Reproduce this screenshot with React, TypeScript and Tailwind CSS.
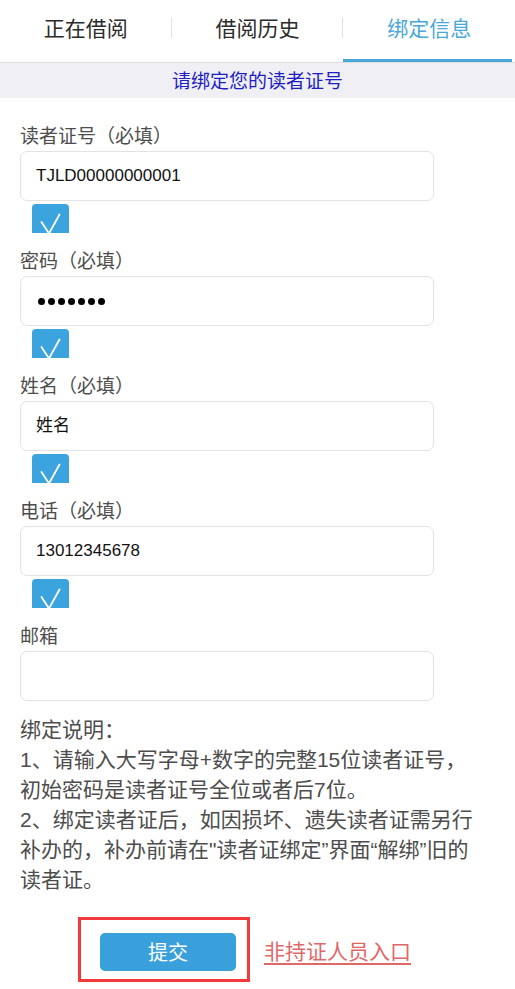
import React from 'react';

const font = { fontFamily: '"Noto Sans CJK SC", "Noto Sans", sans-serif' };
const mixed = { fontFamily: '"Liberation Sans", "Noto Sans CJK SC", sans-serif' };

const tabs = ['正在借阅', '借阅历史', '绑定信息'];

const Check = () => (
  <div className="mt-[3px] ml-[12px] h-[29px] w-[37px] overflow-hidden rounded-t-[4px] bg-[#3ba3de]">
    <svg width="37" height="29" viewBox="0 0 37 29" fill="none">
      <path d="M9.5 18 L17 29.5 L27.5 10.5" stroke="#fff" strokeWidth="1.8" strokeLinecap="round" strokeLinejoin="round" />
    </svg>
  </div>
);

type FieldProps = {
  label: string;
  value?: string;
  password?: boolean;
  checked?: boolean;
};

const Field = ({ label, value = '', password, checked = true }: FieldProps) => (
  <div className="mb-[14px]">
    <div className="h-[26px] text-[19px] leading-[26px] text-[#4d4d4d]">{label}</div>
    <div className="mt-[3px] flex h-[50px] w-[414px] items-center rounded-[7px] border border-[#e3e3e3] bg-white px-[15px]">
      {password ? (
        <div className="flex gap-[3px] pl-[2px]">
          {Array.from({ length: 7 }).map((_, i) => (
            <span key={i} className="h-[7px] w-[7px] rounded-full bg-black" />
          ))}
        </div>
      ) : (
        <input
          readOnly
          value={value}
          className="w-full bg-transparent text-[17px] font-normal text-[#111] outline-none"
          style={mixed}
        />
      )}
    </div>
    {checked && <Check />}
  </div>
);

export default function App() {
  return (
    <div className="h-[989px] w-[515px] overflow-hidden bg-white" style={font}>
      {/* Tabs */}
      <div className="flex h-[62px]">
        {tabs.map((t, i) => (
          <div key={t} className="relative flex flex-1 items-center justify-center pb-[6px]">
            <span className={i === 2 ? 'text-[21px] text-[#4aa8d8]' : 'text-[21px] text-[#2b2b2b]'}>{t}</span>
            {i < 2 && <span className="absolute right-0 top-[17px] h-[21px] w-px bg-[#e2e2e2]" />}
            {i === 2 && <span className="absolute bottom-0 left-0 right-[3px] h-[3px] bg-[#4aa8d8]" />}
          </div>
        ))}
      </div>

      {/* Subtitle */}
      <div className="flex h-[36px] items-center justify-center border-t border-[#dcdcdc] bg-[#efeff4] text-[19px] text-[#1e1ec4]">
        请绑定您的读者证号
      </div>

      {/* Form */}
      <div className="px-[20px] pt-[24px]">
        <Field label="读者证号（必填）" value="TJLD00000000001" />
        <Field label="密码（必填）" password />
        <Field label="姓名（必填）" value="姓名" />
        <Field label="电话（必填）" value="13012345678" />
        <Field label="邮箱" checked={false} />

        <div className="mt-[5px] w-[462px] text-[21px] leading-[30px] text-[#4d4d4d]" style={mixed}>
          <p>绑定说明：</p>
          <p>1、请输入大写字母+数字的完整15位读者证号，初始密码是读者证号全位或者后7位。</p>
          <p>2、绑定读者证后，如因损坏、遗失读者证需另行补办的，补办前请在"读者证绑定”界面“解绑”旧的读者证。</p>
        </div>

        <div className="mt-[22px] flex items-center">
          <div className="ml-[58px] border-[3px] border-[#f23a3a] pb-[8px] pl-[19px] pr-[11px] pt-[13px]">
            <button className="h-[38px] w-[136px] rounded-[5px] bg-[#3aa0dc] text-[20px] text-white">提交</button>
          </div>
          <a className="ml-[14px] mt-[2px] text-[21px] text-[#e06868] underline underline-offset-[4px]">非持证人员入口</a>
        </div>
      </div>
    </div>
  );
}
